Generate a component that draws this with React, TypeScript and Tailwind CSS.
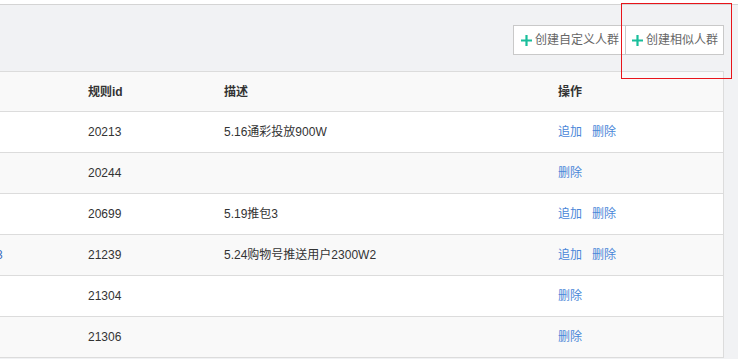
const rows = [
  { lead: "", id: "20213", desc: "5.16通彩投放900W", add: true },
  { lead: "", id: "20244", desc: "", add: false },
  { lead: "", id: "20699", desc: "5.19推包3", add: true },
  { lead: "3", id: "21239", desc: "5.24购物号推送用户2300W2", add: true },
  { lead: "", id: "21304", desc: "", add: false },
  { lead: "", id: "21306", desc: "", add: false },
];

function Plus() {
  return (
    <svg width="13" height="13" viewBox="0 0 13 13" className="shrink-0">
      <path d="M6.5 1v11M1 6.5h11" stroke="#19be9b" strokeWidth="2.2" />
    </svg>
  );
}

export default function App() {
  return (
    <div
      className="relative w-[738px] h-[359px] overflow-hidden bg-white text-[12px] text-[#333]"
      style={{ fontFamily: '"Liberation Sans", "Noto Sans CJK SC", sans-serif' }}
    >
      <div className="h-[5px] bg-white border-b border-[#d4d4d4]" />
      <div className="bg-[#f1f2f4] h-[354px]">
        <div className="flex justify-end pt-[20px] pr-[14px] pb-[16px]">
          <button className="flex items-center gap-[2px] h-[30px] px-[6px] border border-[#c9c9c9] bg-white text-[#666]">
            <Plus />
            创建自定义人群
          </button>
          <button className="flex items-center gap-[2px] h-[30px] px-[5px] border border-l-0 border-[#c9c9c9] bg-white text-[#666]">
            <Plus />
            创建相似人群
          </button>
        </div>
        <div className="w-[724px] bg-white border-r border-[#dcdcdc]">
          <div className="grid grid-cols-[88px_136px_334px_1fr] items-center h-[41px] bg-[#f9f9f9] border-y border-[#dcdcdc] font-bold">
            <div />
            <div>规则id</div>
            <div>描述</div>
            <div>操作</div>
          </div>
          {rows.map((r, i) => (
            <div
              key={r.id}
              className={`grid grid-cols-[88px_136px_334px_1fr] items-center h-[41px] border-b border-[#dcdcdc] ${
                i % 2 === 1 ? "bg-[#f9f9f9]" : "bg-white"
              }`}
            >
              <div className="overflow-hidden">
                {r.lead && <span className="block -ml-[4px] text-[#3d6fc0]">{r.lead}</span>}
              </div>
              <div>{r.id}</div>
              <div>{r.desc}</div>
              <div className="flex gap-[10px] text-[#4a86d8]">
                {r.add && <span>追加</span>}
                <span>删除</span>
              </div>
            </div>
          ))}
        </div>
      </div>
      <div className="absolute left-[621px] top-[3px] w-[111px] h-[76px] border border-[#e8141a]" />
    </div>
  );
}
